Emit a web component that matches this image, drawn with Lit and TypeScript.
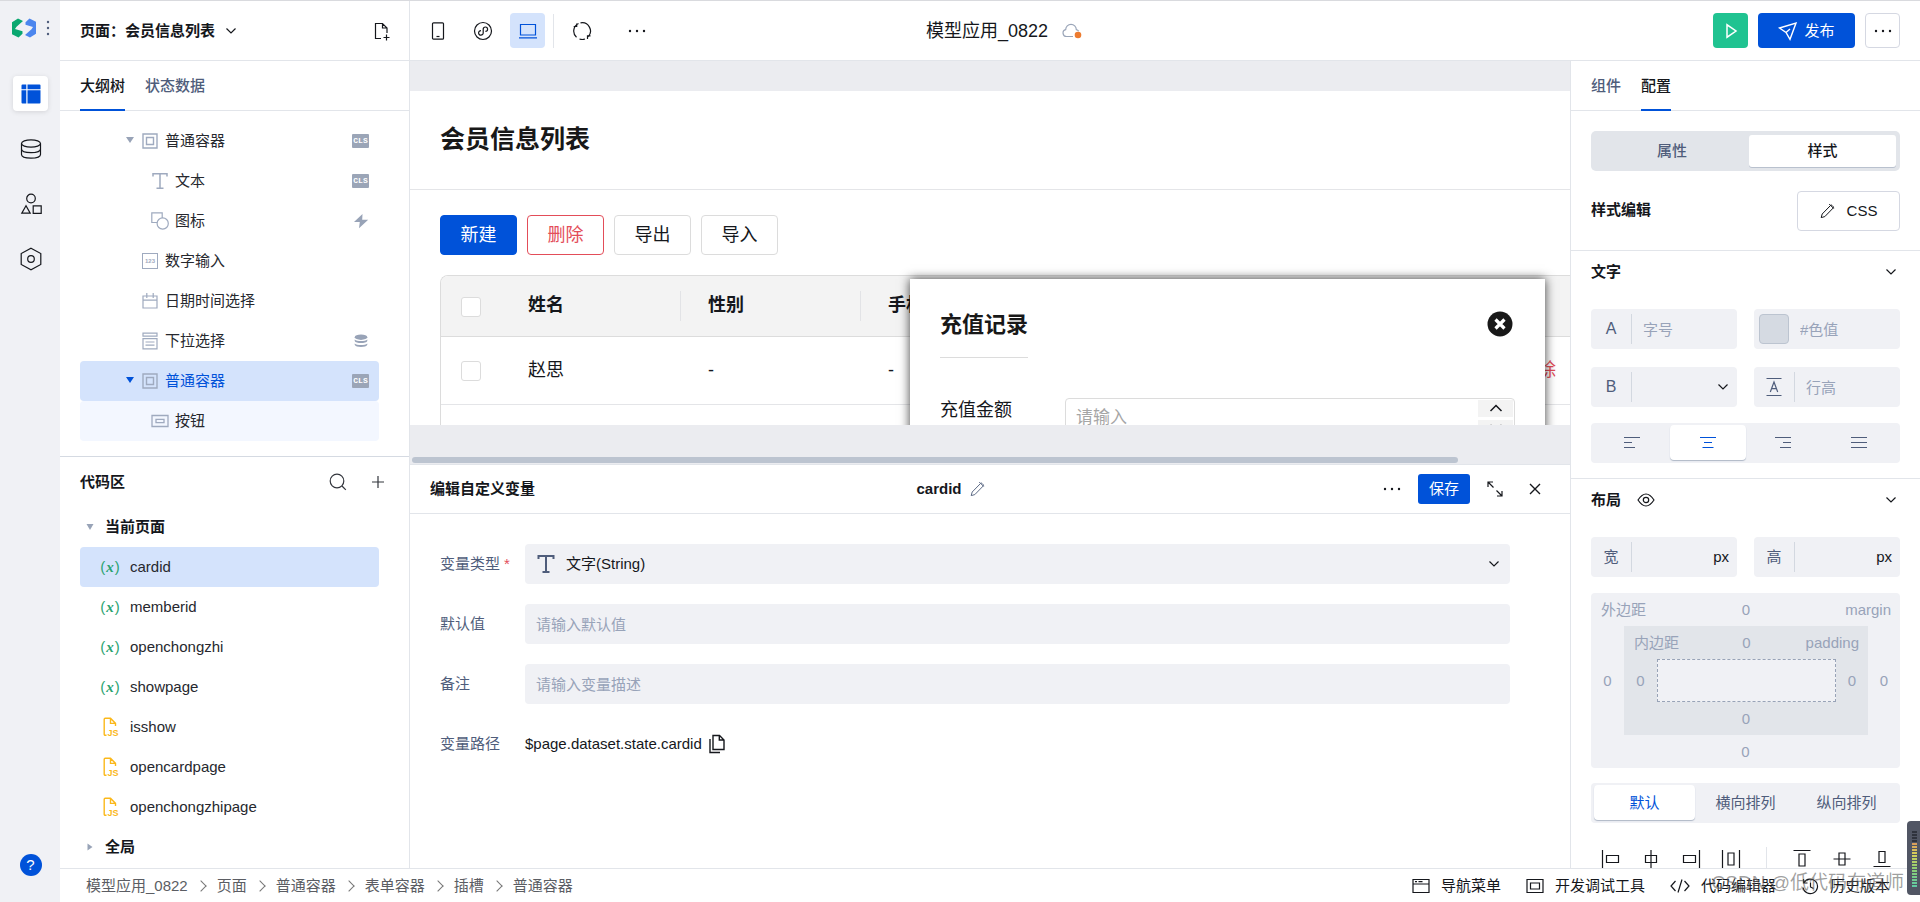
import { LitElement, html, css, svg, nothing } from "lit";
import type { SVGTemplateResult } from "lit";
import { customElement, state } from "lit/decorators.js";
import { classMap } from "lit/directives/class-map.js";

const icon = (w: number, h: number, body: SVGTemplateResult, cls = "") =>
  html`<svg class="ic ${cls}" width=${w} height=${h} viewBox="0 0 ${w} ${h}" aria-hidden="true">${body}</svg>`;

const chevronDown = () => icon(12, 12, svg`<path d="M1.5 3.5 6 8l4.5-4.5" />`);
const dots = () =>
  icon(18, 18, svg`<g fill="currentColor" stroke="none"><circle cx="2" cy="9" r="1.2"/><circle cx="9" cy="9" r="1.2"/><circle cx="16" cy="9" r="1.2"/></g>`);
const pencil = () =>
  icon(15, 16, svg`<path d="M1.2 14.6 2.2 11 10.6 2.4a1 1 0 0 1 1.4 0l1.2 1.200a1 1 0 0 1 0 1.400L4.800 13.600ZM9.200 1l4.500 4.500" stroke-width="1"/>`);

const nodeIcons: Record<string, () => unknown> = {
  box: () => icon(16, 16, svg`<path d="M1 1h14v14H1zM4.5 4.5h7v7h-7z" stroke-width="1.4"/>`),
  text: () => icon(18, 18, svg`<path d="M2 4.5V1.7h14v2.8M9 1.7v14.6M5.5 16.3h7" stroke-width="1.5"/>`),
  shape: () => icon(18, 18, svg`<path d="M6 10.5H.8V.8h10.4V6" stroke-width="1.2"/><circle cx="11.7" cy="11.5" r="5.6" stroke-width="1.2"/>`),
  num: () => html`<span class="num">123</span>`,
  date: () => icon(16, 16, svg`<path d="M1 3h14v12H1zM1 7.2h14M4.8 0v5M11.2 0v5" stroke-width="1.2"/>`),
  select: () => icon(16, 18, svg`<path d="M1 1.2h14v3H1zM1 6.6h14v10.2H1zM3.5 10h9M3.5 13.2h9" stroke-width="1.2"/>`),
  button: () => icon(18, 14, svg`<path d="M1 1.5h16v11H1zM5 5.3h8v3.4H5z" stroke-width="1.3"/>`),
};

const tagIcons: Record<string, () => unknown> = {
  cls: () => html`<span class="cls">CLS</span>`,
  bolt: () => icon(16, 16, svg`<path d="M9.500 1 1 9h5.800L6 15.200 15.200 6.800H9.200Z" fill="currentColor" stroke="none"/>`),
  db: () => icon(14, 14, svg`<g fill="currentColor" stroke="none"><ellipse cx="7" cy="3.2" rx="6.3" ry="2.7"/><path d="M.7 5.4c2 2.2 10.6 2.2 12.6 0v1.5c-1 2.7-11.6 2.7-12.6 0ZM.7 9.4c2 2.2 10.6 2.2 12.6 0v1.4c-1 2.9-11.6 2.9-12.6 0Z"/></g>`),
};

interface TreeNode {
  label: string;
  icon: string;
  level: 1 | 2;
  caret?: boolean;
  tag?: string;
  mode?: "active" | "within";
}

const tree: TreeNode[] = [
  { label: "普通容器", icon: "box", level: 1, caret: true, tag: "cls" },
  { label: "文本", icon: "text", level: 2, tag: "cls" },
  { label: "图标", icon: "shape", level: 2, tag: "bolt" },
  { label: "数字输入", icon: "num", level: 1 },
  { label: "日期时间选择", icon: "date", level: 1 },
  { label: "下拉选择", icon: "select", level: 1, tag: "db" },
  { label: "普通容器", icon: "box", level: 1, caret: true, tag: "cls", mode: "active" },
  { label: "按钮", icon: "button", level: 2, mode: "within" },
];

const codeItems = [
  { name: "cardid", kind: "var" },
  { name: "memberid", kind: "var" },
  { name: "openchongzhi", kind: "var" },
  { name: "showpage", kind: "var" },
  { name: "isshow", kind: "js" },
  { name: "opencardpage", kind: "js" },
  { name: "openchongzhipage", kind: "js" },
];

const crumbs = ["模型应用_0822", "页面", "普通容器", "表单容器", "插槽", "普通容器"];

const alignIcons = [
  svg`<path d="M1 1.500h16M1 6.500h8M1 11.500h11"/>`,
  svg`<path d="M1 1.500h16M5 6.500h8M3.500 11.500h11"/>`,
  svg`<path d="M1 1.500h16M9 6.500h8M6 11.500h11"/>`,
  svg`<path d="M1 1.500h16M1 6.500h16M1 11.500h16"/>`,
];

const flexIcons = [
  svg`<path d="M1.5 1v18M5.5 6.5h12v7h-12z"/>`,
  svg`<path d="M10 1v18M4.5 6.5h11v7h-11z"/>`,
  svg`<path d="M18.5 1v18M2.5 6.5h12v7h-12z"/>`,
  svg`<path d="M1.5 1v18M18.5 1v18M7 4h6v12H7z"/>`,
];
const flexIcons2 = [
  svg`<path d="M1.5 1.5h17M7 5h6v12H7z"/>`,
  svg`<path d="M1.5 10h17M7 4h6v12H7z"/>`,
  svg`<path d="M1.5 17.5h17M7 2.5h6v11H7z"/>`,
];

@customElement("app-root")
export class AppRoot extends LitElement {
  @state() private code = "cardid";
  @state() private align = 1;
  @state() private flow = 0;

  static styles = css`
    :host {
      display: block;
      --blue: #0052d9;
      --line: #e2e5ea;
      --ink: #15171c;
      --sub: #4f5d7b;
      --mute: #98a3b7;
      --field: #f0f1f5;
      color: var(--ink);
      font: 15px/22px "Liberation Sans", "Noto Sans CJK SC", sans-serif;
    }
    * { box-sizing: border-box; }
    h1, h2, h3, p, ul, ol { margin: 0; padding: 0; font: inherit; list-style: none; }
    button, input, select { font: inherit; color: inherit; margin: 0; }
    button { display: inline-flex; align-items: center; justify-content: center; padding: 0; border: 0; background: none; cursor: pointer; }
    a { color: inherit; text-decoration: none; }
    .ic { display: block; flex: none; fill: none; stroke: currentColor; stroke-width: 1.2; }
    h2.strong, .strong { font-weight: 600; }

    .app { display: flex; height: 100vh; overflow: hidden; position: relative; border-top: 1px solid #d9dade; background: #fff; }
    .rail { flex: 0 0 60px; display: flex; flex-direction: column; align-items: center; background: var(--field); padding: 17px 0 26px 1px; }
    .logo { display: flex; align-items: center; gap: 10px; margin-bottom: 38px; }
    .rail nav { display: flex; flex-direction: column; gap: 20px; }
    .rail nav button { width: 35px; height: 35px; border-radius: 4px; }
    .rail nav .on { background: #fff; color: var(--blue); box-shadow: 0 1px 5px #0000001f; }
    .help { margin-top: auto; width: 22px; height: 22px; border-radius: 50%; background: var(--blue); color: #fff; font-size: 15px; }
    .work { flex: 1; min-width: 0; display: flex; flex-direction: column; }

    .top { flex: 0 0 60px; display: grid; grid-template-columns: 1fr auto 1fr; align-items: center; border-bottom: 1px solid var(--line); }
    .top-left { display: flex; align-items: center; height: 100%; }
    .pick { width: 350px; height: 100%; display: flex; align-items: center; justify-content: space-between; padding: 0 18px 0 20px; border-right: 1px solid var(--line); }
    .pick .name { gap: 10px; }
    .tools { display: flex; align-items: center; padding-left: 10px; gap: 10px; }
    .tools button, .square { width: 35px; height: 35px; border-radius: 4px; }
    .tools .on { background: #d4e3fc; color: var(--blue); }
    .tools .bar { width: 1px; height: 34px; background: var(--line); margin-left: -2px; }
    .tools .more { margin-left: 10px; }
    .app-name { display: flex; align-items: center; gap: 14px; padding-left: 28px; font-size: 18px; }
    .acts { display: flex; justify-content: flex-end; gap: 10px; padding-right: 20px; }
    .run { background: #20c391; color: #fff; }
    .publish { width: 97px; height: 35px; gap: 6px; border-radius: 4px; background: var(--blue); color: #fff; }
    .outlined { border: 1px solid #d5d8e2; border-radius: 4px; }

    .main { flex: 1; min-height: 0; display: flex; }
    .left { flex: 0 0 350px; display: flex; flex-direction: column; border-right: 1px solid var(--line); }
    .tabs { flex: 0 0 50px; min-height: 0; display: flex; gap: 20px; padding: 0 20px; border-bottom: 1px solid var(--line); }
    .tabs button { height: 50px; padding-top: 2px; color: var(--sub); border-bottom: 2px solid transparent; font-weight: 500; }
    .tabs .on { color: var(--ink); border-color: var(--blue); }

    .tree { flex: 0 0 346px; padding: 10px 30px 0 20px; border-bottom: 1px solid #d5dae2; }
    .row { display: flex; align-items: center; height: 40px; border-radius: 4px; color: #26282e; }
    .node { padding: 0 10px 0 42px; }
    .node.lv2 { padding-left: 52px; }
    .caret { flex: 0 0 16px; display: flex; padding-left: 4px; color: var(--mute); }
    .slot { flex: 0 0 24px; display: flex; justify-content: center; color: #9faabf; margin-right: 3px; }
    .node .tag { margin-left: auto; width: 17px; display: flex; justify-content: center; color: var(--mute); }
    .node.active { background: #d4e3fc; color: var(--blue); }
    .node.active .caret { color: var(--blue); }
    .node.within { background: #f3f7ff; }
    .num { width: 16px; height: 16px; border: 1px solid currentColor; font: 700 6px/14px "Liberation Sans", sans-serif; text-align: center; }
    .cls { flex: none; width: 17px; height: 14px; border-radius: 1px; background: #9ba5b7; color: #fff; font: 700 8px/14px "Liberation Mono", monospace; text-align: center; }

    .code { flex: 1; min-height: 0; overflow: hidden; padding: 0 30px 0 20px; }
    .code-head { display: flex; align-items: center; height: 50px; color: var(--ink); margin-right: -10px; }
    .code-head h2 { flex: 1; }
    .code-head button { width: 22px; height: 22px; margin-left: 18px; color: #33363d; }
    .group { padding-left: 6px; gap: 11px; font-weight: 600; color: var(--ink); width: 100%; justify-content: flex-start; }
    .item { width: 100%; padding-left: 20px; gap: 10px; justify-content: flex-start; }
    .item.on { background: #d4e3fc; }
    .fx { width: 20px; display: flex; justify-content: center; color: #2ba471; }
    .fx i { font-family: "Liberation Serif", serif; font-weight: 700; padding: 0 1px; }
    .js { width: 20px; display: flex; justify-content: center; color: #fbb81a; }
    .js text { font: 700 9px "Liberation Sans", sans-serif; fill: currentColor; stroke: none; }

    .center { flex: 1; min-width: 0; display: flex; flex-direction: column; }
    .canvas { flex: 0 0 403px; min-height: 0; display: flex; flex-direction: column; background: #ebecf0; padding-top: 30px; }
    .page { flex: 1 1 0; min-height: 0; position: relative; overflow: hidden; background: #fff; font-size: 18px; line-height: 24px; }
    .page-title { height: 99px; padding: 33px 30px; border-bottom: 1px solid #e4e5e8; font-size: 25px; line-height: 30px; font-weight: 700; color: #181818; }
    .page-btns { display: flex; gap: 10px; padding: 25px 30px 20px; }
    .page-btns button { width: 77px; height: 40px; border: 1px solid #dcdcdc; border-radius: 4px; }
    .page-btns .primary { background: var(--blue); border-color: var(--blue); color: #fff; }
    .page-btns .danger { border-color: #e34d59; color: #e34d59; }
    .sheet { margin-left: 30px; border: 1px solid #dcdcdc; border-right: 0; border-radius: 8px 0 0 0; overflow: hidden; }
    .sheet table { width: 100%; table-layout: fixed; border-collapse: collapse; }
    .sheet th, .sheet td { text-align: left; padding: 0 0 0 27px; border-bottom: 1px solid #e4e5e8; }
    .sheet th { height: 60px; background: #f3f3f3; font-weight: 700; border-color: #dcdcdc; }
    .sheet th > span { display: block; height: 30px; line-height: 28px; }
    .sheet th.cut { background: linear-gradient(#e2e3e6, #e2e3e6) right center / 1px 30px no-repeat #f3f3f3; }
    .sheet td { height: 68px; }
    .sheet .tick { padding: 2px 0 0 20px; }
    .sheet .ops { text-align: right; padding-right: 14px; color: #e34d59; }
    .sheet input { display: block; appearance: none; width: 20px; height: 20px; border: 1px solid #dcdcdc; border-radius: 3px; background: #fff; }
    .dialog { position: absolute; top: 188px; right: 25px; width: 635px; height: 320px; padding: 30px; background: #fff; box-shadow: 0 0 10px #000000c0; }
    .dialog-head { display: flex; justify-content: space-between; align-items: flex-start; }
    .dialog h3 { height: 49px; font-size: 22px; line-height: 32px; font-weight: 700; color: #181818; border-bottom: 1px solid #dcdcdc; }
    .dialog-head button { margin: 2px 2px 0 0; }
    .amount { display: flex; padding-top: 40px; }
    .amount label { width: 125px; }
    .stepper { flex: 1; display: flex; height: 40px; border: 1px solid #dcdcdc; border-radius: 4px; }
    .stepper input { flex: 1; min-width: 0; border: 0; padding: 0 10px; background: none; font-size: 17px; }
    .stepper input::placeholder { color: #a6a6a6; opacity: 1; }
    .stepper div { width: 36px; display: flex; flex-direction: column; gap: 3px; padding: 1px 1px 1px 0; }
    .stepper button { flex: 1; background: #f3f3f3; }
    .hscroll { flex: 0 0 39px; display: flex; align-items: flex-end; padding: 0 0 1px 2px; }
    .hscroll span { width: 90.3%; height: 6px; border-radius: 3px; background: #bcc4d0; }

    .editor { flex: 1; min-height: 0; overflow: hidden; border-top: 1px solid var(--line); }
    .ed-head { display: flex; align-items: center; justify-content: space-between; height: 49px; padding: 0 20px; border-bottom: 1px solid var(--line); }
    .ed-name { display: flex; align-items: center; gap: 8px; font-weight: 700; }
    .ed-name .ic { color: #5d6b86; }
    .ed-acts { display: flex; align-items: center; }
    .ed-acts .more { width: 52px; height: 30px; }
    .ed-acts .save { width: 52px; height: 30px; border-radius: 3px; background: var(--blue); color: #fff; }
    .ed-acts .mini { width: 30px; height: 30px; margin-left: 10px; }
    .form { display: flex; flex-direction: column; gap: 20px; padding: 30px 60px 0 30px; }
    .line { display: flex; align-items: center; height: 40px; }
    .line label, .line .lab { flex: 0 0 85px; color: var(--sub); }
    .line em { color: #e34d59; font-style: normal; margin-left: 4px; }
    .control { flex: 1; display: grid; align-items: center; height: 40px; border-radius: 4px; background: var(--field); }
    .control > * { grid-area: 1 / 1; }
    .control .lead { margin-left: 12px; color: #4f5d7b; }
    .control .tail { margin-right: 10px; justify-self: end; }
    .control select, .control input, .fld input, .fld select { appearance: none; width: 100%; height: 100%; border: 0; outline: 0; background: none; padding: 0 11px; border-radius: 4px; }
    .control select { padding-left: 41px; }
    input::placeholder { color: #98a3b9; opacity: 1; }
    .copy { margin-left: 6px; }

    .right { flex: 0 0 350px; display: flex; flex-direction: column; overflow: hidden; border-left: 1px solid var(--line); }
    .right section { flex: none; padding: 0 20px 15px; border-bottom: 1px solid var(--line); }
    .right section.plain { padding: 20px 20px 19px; }
    .right section.last { border: 0; padding-bottom: 0; }
    .switch { display: flex; height: 40px; border-radius: 5px; background: #e2e5ea; padding: 4px; margin-bottom: 20px; }
    .switch button { flex: 1; color: var(--sub); font-weight: 500; }
    .switch .on { flex: 0 0 147px; background: #fff; border-radius: 3px; color: var(--ink); box-shadow: 0 1px #b9c1ce; height: 32px; }
    .edit { display: flex; align-items: flex-start; justify-content: space-between; }
    .edit h3 { line-height: 38px; font-weight: 600; }
    .edit button { width: 103px; height: 40px; gap: 12px; }
    .sec-title { display: flex; align-items: center; width: 100%; height: 42px; padding-right: 3px; margin-bottom: 16px; font-weight: 600; gap: 16px; }
    .sec-title .ic:last-child { margin-left: auto; }
    .grid { display: grid; grid-template-columns: 1fr 1fr; gap: 18px 17px; margin-bottom: 16px; }
    .fld { display: flex; align-items: center; height: 40px; min-width: 0; border-radius: 4px; background: var(--field); color: var(--sub); }
    .fld .pre { flex: 0 0 41px; height: 30px; display: flex; align-items: center; justify-content: center; border-right: 1px solid #d3d8e0; font-size: 16px; }
    .fld.cjk .pre { font-size: 15px; }
    .fld input { min-width: 0; flex: 1; }
    .fld .unit { color: var(--ink); padding-right: 8px; }
    .fld .chev { margin: 0 8px 0 0; color: var(--ink); }
    .swatch { flex: 0 0 30px; height: 30px; margin-left: 5px; border: 1px solid #bcc4d0; border-radius: 4px; background: #d5dae2; }
    .seg { display: flex; height: 40px; padding: 2px 3px 3px; border-radius: 4px; background: var(--field); }
    .seg button { flex: 1; border-radius: 4px; color: var(--sub); }
    .seg .on { background: #fff; color: var(--blue); box-shadow: 0 1px 1px #aeb7c6; }
    .box { display: grid; grid-template-columns: 33px 1fr 32px; grid-template-rows: 33px 1fr 33px; color: #98a3b9; align-items: center; justify-items: center; }
    .box > .cap { grid-column: 1 / -1; width: 100%; display: grid; grid-template-columns: 1fr auto 1fr; padding: 0 9px 0 10px; }
    .box .cap span:last-child { text-align: right; }
    .box > .foot { grid-column: 1 / -1; }
    .box > .mid { width: 100%; height: 100%; }
    .outer { height: 175px; border-radius: 4px; background: var(--field); margin-bottom: 15px; }
    .inner { background: #e2e5ea; }
    .hole { border: 1px dashed #98a3b7; background: var(--field); }
    .flexers { display: flex; margin: 24px -2px 0 0; }
    .flexers button { flex: 0 0 40px; height: 24px; }
    .flexers span { width: 1px; background: var(--line); margin: 0 15px; height: 24px; }

    .bottom { flex: 0 0 34px; display: flex; align-items: center; justify-content: space-between; border-top: 1px solid var(--line); padding: 0 30px 0 26px; }
    .bottom ol { display: flex; color: #5b5d63; }
    .bottom li { display: flex; align-items: center; }
    .bottom li + li::before { content: ""; width: 7px; height: 7px; margin: 0 12px 0 9px; border: solid #777; border-width: 1px 1px 0 0; transform: rotate(45deg); }
    .links { display: flex; gap: 25px; }
    .links button { gap: 11px; }
    .mark { position: absolute; right: 16px; bottom: 6px; font-size: 19px; line-height: 26px; color: #55555590; pointer-events: none; }
    .meter { position: absolute; right: 0; bottom: 7px; width: 13px; height: 74px; border-radius: 4px 0 0 4px; background: #515664; padding: 9px 3px 7px 5px; display: flex; }
    .meter span { flex: 1; background: repeating-linear-gradient(#515664 0 1px, transparent 1px 3px), linear-gradient(#2f333d 0 20%, #d99a5b 22%, #d6cf5a 42%, #8fcf72 66%, #5cc9a7 100%); }
  `;

  private treeRow(n: TreeNode) {
    return html`<li class=${classMap({ row: true, node: true, lv2: n.level === 2, active: n.mode === "active", within: n.mode === "within" })}>
      <span class="caret">${n.caret ? icon(8, 10, svg`<path d="M0 1h8L4 7z" fill="currentColor" stroke="none"/>`) : nothing}</span>
      <span class="slot">${nodeIcons[n.icon]()}</span>
      <span>${n.label}</span>
      ${n.tag ? html`<span class="tag">${tagIcons[n.tag]()}</span>` : nothing}
    </li>`;
  }

  private codeRow(c: { name: string; kind: string }) {
    return html`<li><button class=${classMap({ row: true, item: true, on: this.code === c.name })} @click=${() => (this.code = c.name)}>
      ${c.kind === "var"
        ? html`<span class="fx">(<i>x</i>)</span>`
        : html`<span class="js">${icon(18, 20, svg`<path d="M5.500 18.300H4.200a1 1 0 0 1-1-1V2.200a1 1 0 0 1 1-1H9.500L14.500 6.400V9M9.500 1.400v5h5" stroke-width="1.400"/><text x="6.500" y="18.700">JS</text>`)}</span>`}
      <span>${c.name}</span>
    </button></li>`;
  }

  private rail() {
    return html`<div class="rail">
      <div class="logo">
        ${icon(24, 20, svg`<g stroke="none"><path d="M0 4.200 6 .5l5 2.500-6.500 5.700L3 11l7.500 2.200v2.600L6.500 19.500 0 16.200Z" fill="#0aa870"/><path d="M24 15.800 18 19.500l-5-2.500 6.500-5.700L21 9l-7.500-2.200V4.200L17.500 .5 24 3.800Z" fill="#4c86ee"/></g>`)}
        ${icon(4, 16, svg`<g fill="#4f5d7b" stroke="none"><circle cx="2" cy="2" r="1.200"/><circle cx="2" cy="8" r="1.200"/><circle cx="2" cy="14" r="1.200"/></g>`)}
      </div>
      <nav>
        <button class="on" aria-label="页面设计">${icon(20, 20, svg`<path d="M.5 1.500q0-1 1-1h3.800v4.700H.5zM.5 6.200h4.800v13.300H1.500q-1 0-1-1zM6.500 .5h12q1 0 1 1v3.700h-13zM6.500 6.200h13v12.300q0 1-1 1H6.500z" fill="currentColor" stroke="none"/>`)}</button>
        <button aria-label="数据源">${icon(22, 20, svg`<ellipse cx="11" cy="4.500" rx="9.500" ry="3.700"/><path d="M1.500 4.500v11c0 4.800 19 4.800 19 0v-11M1.500 10c0 4.800 19 4.800 19 0"/>`)}</button>
        <button aria-label="素材">${icon(22, 22, svg`<circle cx="11" cy="5.500" r="4.300"/><path d="M6 12.800 1.800 20.200h8.400ZM13.200 12.800h8v7.600h-8z"/>`)}</button>
        <button aria-label="设置">${icon(22, 24, svg`<path d="M11 1.200 20.800 6.500v11L11 22.800 1.200 17.500v-11Z"/><circle cx="11" cy="12" r="3.300"/>`)}</button>
      </nav>
      <button class="help">?</button>
    </div>`;
  }

  private header() {
    return html`<header class="top">
      <div class="top-left">
        <div class="pick">
          <button class="name strong">页面：会员信息列表 ${chevronDown()}</button>
          <button aria-label="新建页面">${icon(18, 20, svg`<path d="M8 17.500H2.500V2.500h7L14 7v5M9.500 2.700V7H14M13.500 13.500v6M10.500 16.500h6"/>`)}</button>
        </div>
        <div class="tools">
          <button aria-label="手机">${icon(14, 20, svg`<rect x="1.500" y="1.800" width="11" height="16.400" rx="1"/><path d="M5.500 15.500h3"/>`)}</button>
          <button aria-label="小程序">${icon(20, 20, svg`<circle cx="10" cy="10" r="8.500"/><path d="M8 9.600a2.300 2.300 0 1 0 2.200 2.300V8.100a2.200 2.200 0 1 1 2.200 2.300"/>`)}</button>
          <button class="on" aria-label="电脑">${icon(20, 18, svg`<path d="M2.500 2.500h15v10.500h-15zM1 15.800h18"/>`)}</button>
          <span class="bar"></span>
          <button aria-label="刷新">${icon(20, 20, svg`<path d="M6.500 2.500A8.300 8.300 0 0 0 4.500 16.200M7.500 18a8.300 8.300 0 0 0 5.500 0M8.500 1.900a8.300 8.300 0 0 1 7.500 14M1.700 5.500h3V2.500M18.500 14.800h-3v3.200"/>`)}</button>
          <button class="more" aria-label="更多">${dots()}</button>
        </div>
      </div>
      <h1 class="app-name">模型应用_0822
        ${icon(20, 16, svg`<path d="M11 13.500H4.500a3.500 3.500 0 0 1-.8-6.900 5.300 5.300 0 0 1 10.600 0q1.700.4 2.400 1.700" stroke="#9aa5b8"/><circle cx="16" cy="12" r="3.300" fill="#ed7b2f" stroke="none"/>`)}
      </h1>
      <div class="acts">
        <button class="square run" aria-label="预览">${icon(14, 16, svg`<path d="M3 1.800v12.400L12 8Z" stroke-width="1.500"/>`)}</button>
        <button class="publish">${icon(20, 20, svg`<path d="M1.500 7 18 2l-6 16.300-4-6.800ZM8 11.500l4-3.500" stroke-width="1.400"/>`)} 发布</button>
        <button class="square outlined" aria-label="更多操作">${dots()}</button>
      </div>
    </header>`;
  }

  private leftPane() {
    return html`<aside class="left">
      <div class="tabs"><button class="on">大纲树</button><button>状态数据</button></div>
      <ul class="tree">${tree.map((n) => this.treeRow(n))}</ul>
      <div class="code">
        <div class="code-head">
          <h2 class="strong">代码区</h2>
          <button aria-label="搜索">${icon(18, 18, svg`<circle cx="8" cy="8" r="6.800"/><path d="m13 13 3.800 3.800"/>`)}</button>
          <button aria-label="新增">${icon(14, 14, svg`<path d="M7 1v12M1 7h12"/>`)}</button>
        </div>
        <button class="row group">${icon(8, 8, svg`<path d="M.5 1h7L4 7z" fill="#98a3b7" stroke="none"/>`)}当前页面</button>
        <ul>${codeItems.map((c) => this.codeRow(c))}</ul>
        <button class="row group">${icon(8, 8, svg`<path d="M1.500 .5v7L6.500 4z" fill="#98a3b7" stroke="none"/>`)}全局</button>
      </div>
    </aside>`;
  }

  private canvas() {
    return html`<div class="canvas">
      <div class="page">
        <h2 class="page-title">会员信息列表</h2>
        <div class="page-btns">
          <button class="primary">新建</button><button class="danger">删除</button><button>导出</button><button>导入</button>
        </div>
        <div class="sheet">
          <table>
            <colgroup><col style="width:60px" /><col style="width:180px" /><col style="width:180px" /><col style="width:180px" /><col /></colgroup>
            <thead><tr>
              <th class="tick"><input type="checkbox" aria-label="全选" /></th>
              <th class="cut"><span>姓名</span></th><th class="cut"><span>性别</span></th><th><span>手机</span></th><th></th>
            </tr></thead>
            <tbody>
              <tr><td class="tick"><input type="checkbox" aria-label="选择赵思" /></td><td>赵思</td><td>-</td><td>-</td><td class="ops"><a href="#">删除</a></td></tr>
              <tr><td></td><td></td><td></td><td></td><td></td></tr>
            </tbody>
          </table>
        </div>
        <div class="dialog" role="dialog" aria-label="充值记录">
          <div class="dialog-head">
            <h3>充值记录</h3>
            <button aria-label="关闭">${icon(26, 26, svg`<circle cx="13" cy="13" r="12.500" fill="#181818" stroke="none"/><path d="m8.500 8.500 9 9m0-9-9 9" stroke="#fff" stroke-width="3.200"/>`)}</button>
          </div>
          <div class="amount">
            <label for="amount">充值金额</label>
            <div class="stepper">
              <input id="amount" placeholder="请输入" />
              <div><button aria-label="增加">${icon(14, 10, svg`<path d="m1.500 8 5.500-5.500L12.500 8" stroke-width="1.500"/>`)}</button><button aria-label="减少">${icon(14, 10, svg`<path d="m1.500 2 5.500 5.500L12.500 2" stroke-width="1.500"/>`)}</button></div>
            </div>
          </div>
        </div>
      </div>
      <div class="hscroll"><span></span></div>
    </div>`;
  }

  private editor() {
    return html`<section class="editor">
      <div class="ed-head">
        <h2 class="strong">编辑自定义变量</h2>
        <div class="ed-name">${this.code} ${pencil()}</div>
        <div class="ed-acts">
          <button class="more" aria-label="更多">${dots()}</button>
          <button class="save">保存</button>
          <button class="mini" aria-label="展开">${icon(18, 18, svg`<path d="M2 7V2h5M2 2l5.500 5.500M11 16h5v-5M16 16l-5.500-5.500"/>`)}</button>
          <button class="mini" aria-label="关闭">${icon(14, 14, svg`<path d="m2 2 10 10m0-10L2 12" stroke-width="1.400"/>`)}</button>
        </div>
      </div>
      <div class="form">
        <div class="line"><label for="kind">变量类型<em>*</em></label>
          <div class="control">
            <select id="kind"><option>文字(String)</option></select>
            <span class="lead">${icon(18, 20, svg`<path d="M1.500 5V2h15v3M9 2v16M5.500 18h7" stroke-width="2"/>`)}</span>
            <span class="tail">${chevronDown()}</span>
          </div>
        </div>
        <div class="line"><label for="def">默认值</label><div class="control"><input id="def" placeholder="请输入默认值" /></div></div>
        <div class="line"><label for="memo">备注</label><div class="control"><input id="memo" placeholder="请输入变量描述" /></div></div>
        <div class="line"><span class="lab">变量路径</span><span>$page.dataset.state.${this.code}</span>
          <button class="copy" aria-label="复制">${icon(18, 20, svg`<path d="M5 1.500h6.500L16 6v9.500H5zM11.300 1.700V6H16M2 5v13.500h10" stroke-width="1.400"/>`)}</button>
        </div>
      </div>
    </section>`;
  }

  private rightPane() {
    const lineHeight = icon(16, 20, svg`<path d="M.5 1.500h15M.5 18.500h15M4.300 15 8 5l3.700 10M5.500 11.700h5"/>`);
    return html`<aside class="right">
      <div class="tabs"><button>组件</button><button class="on">配置</button></div>
      <section class="plain">
        <div class="switch"><button>属性</button><button class="on">样式</button></div>
        <div class="edit"><h3>样式编辑</h3><button class="outlined">${pencil()} CSS</button></div>
      </section>
      <section>
        <button class="sec-title">文字 ${chevronDown()}</button>
        <div class="grid">
          <label class="fld"><span class="pre">A</span><input placeholder="字号" /></label>
          <label class="fld"><span class="swatch"></span><input placeholder="#色值" /></label>
          <label class="fld"><span class="pre">B</span><select aria-label="字重"><option></option></select><span class="chev">${chevronDown()}</span></label>
          <label class="fld"><span class="pre">${lineHeight}</span><input placeholder="行高" /></label>
        </div>
        <div class="seg">${alignIcons.map((body, i) => html`<button class=${classMap({ on: this.align === i })} aria-label="对齐 ${i + 1}" @click=${() => (this.align = i)}>${icon(18, 13, body)}</button>`)}</div>
      </section>
      <section class="last">
        <button class="sec-title">布局 ${icon(18, 14, svg`<path d="M1 7q8-12 16 0-8 12-16 0Z"/><circle cx="9" cy="7" r="2.700"/>`)} ${chevronDown()}</button>
        <div class="grid">
          <label class="fld cjk"><span class="pre">宽</span><input /><span class="unit">px</span></label>
          <label class="fld cjk"><span class="pre">高</span><input /><span class="unit">px</span></label>
        </div>
        <div class="box outer">
          <div class="cap"><span>外边距</span><span>0</span><span>margin</span></div>
          <span>0</span>
          <div class="box inner mid">
            <div class="cap"><span>内边距</span><span>0</span><span>padding</span></div>
            <span>0</span><div class="hole mid"></div><span>0</span>
            <span class="foot">0</span>
          </div>
          <span>0</span>
          <span class="foot">0</span>
        </div>
        <div class="seg">${["默认", "横向排列", "纵向排列"].map((t, i) => html`<button class=${classMap({ on: this.flow === i })} @click=${() => (this.flow = i)}>${t}</button>`)}</div>
        <div class="flexers">
          ${flexIcons.map((b, i) => html`<button aria-label="水平 ${i + 1}">${icon(20, 20, b)}</button>`)}
          <span></span>
          ${flexIcons2.map((b, i) => html`<button aria-label="垂直 ${i + 1}">${icon(20, 20, b)}</button>`)}
        </div>
      </section>
    </aside>`;
  }

  render() {
    return html`<div class="app">
      ${this.rail()}
      <div class="work">
        ${this.header()}
        <div class="main">
          ${this.leftPane()}
          <main class="center">${this.canvas()}${this.editor()}</main>
          ${this.rightPane()}
        </div>
        <footer class="bottom">
          <ol>${crumbs.map((c) => html`<li><a href="#">${c}</a></li>`)}</ol>
          <div class="links">
            <button>${icon(18, 16, svg`<path d="M1 1.500h16v13H1zM1 6h16M3 3.700h2M6.500 3.700h4"/>`)}导航菜单</button>
            <button>${icon(18, 16, svg`<path d="M1 1.500h16v13H1zM4.500 5h9v6h-9z"/>`)}开发调试工具</button>
            <button>${icon(20, 16, svg`<path d="M5.500 3 1 8l4.500 5M14.500 3 19 8l-4.500 5M12 1.500l-4 13"/>`)}代码编辑器</button>
            <button>${icon(18, 18, svg`<path d="M3 5.500a7.300 7.300 0 1 1-1 5M2.500 2v4h4M9.500 5.500V10l3 1.500"/>`)}历史版本</button>
          </div>
        </footer>
      </div>
      <div class="mark">CSDN @低代码布道师</div>
      <div class="meter"><span></span></div>
    </div>`;
  }
}
